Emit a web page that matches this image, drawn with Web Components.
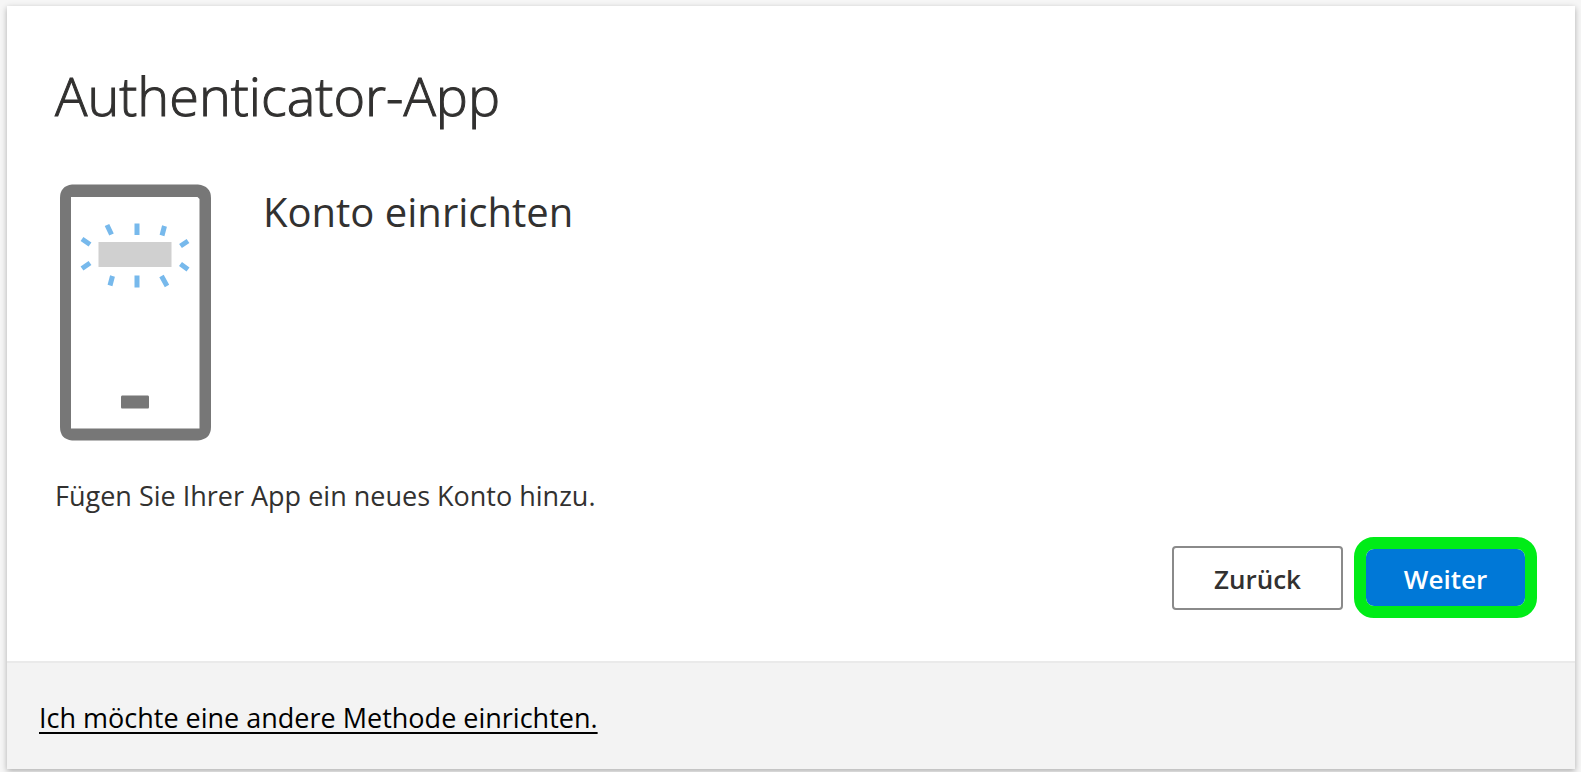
<!DOCTYPE html>
<html lang="de">
<head>
<meta charset="utf-8">
<meta name="viewport" content="width=device-width, initial-scale=1">
<title>Authenticator-App</title>
<style>
  html { background: #f6f6f6; }
  body { margin: 0; padding: 6px 6px 3px 7px; font: 27px/36px "Segoe UI", "Open Sans", "Noto Sans", sans-serif; color: #323130; }
</style>
</head>
<body>
<setup-card>
  <span slot="title">Authenticator-App</span>
  <phone-illustration slot="picture"></phone-illustration>
  <span slot="heading">Konto einrichten</span>
  <span slot="text">Fügen Sie Ihrer App ein neues Konto hinzu.</span>
  <action-button slot="actions">Zurück</action-button>
  <action-button slot="actions" primary>Weiter</action-button>
  <method-link slot="footer" href="#methode">Ich möchte eine andere Methode einrichten.</method-link>
</setup-card>

<template id="setup-card">
  <style>
    :host { display: block; background: #fff; box-shadow: 0 2px 6px rgba(0,0,0,.3); }
    main { padding: 57px 38px 43px 48px; }
    h1, h2, p { margin: 0; }
    h1 { font-size: 54px; line-height: 64px; font-weight: 300; -webkit-text-stroke: 1px currentColor; }
    .intro { display: flex; align-items: flex-start; gap: 52px; margin-top: 55px; }
    h2 { font-size: 40px; line-height: 60px; font-weight: 400; }
    p { margin-top: 37px; }
    .actions { display: flex; justify-content: flex-end; align-items: center; gap: 11px; margin-top: 23px; }
    footer { background: #f3f3f3; border-top: 2px solid #eaeaea; padding: 37px 32px 33px; }
  </style>
  <main>
    <h1><slot name="title"></slot></h1>
    <div class="intro">
      <slot name="picture"></slot>
      <h2><slot name="heading"></slot></h2>
    </div>
    <p><slot name="text"></slot></p>
    <div class="actions"><slot name="actions"></slot></div>
  </main>
  <footer><slot name="footer"></slot></footer>
</template>

<template id="phone-illustration">
  <style>
    :host { display: block; flex: none; padding: 2px 0 0 4px; }
    svg { display: block; width: 152px; height: 257px; }
  </style>
  <svg viewBox="0 0 152 257" aria-hidden="true">
    <path fill="#777" fill-rule="evenodd" d="M13 .5H139Q152 2 152 14V243Q152 255 139 256.500H13Q1 255 1 243V14Q1 2 13 .5ZM12 13V244.500H140.500V15L138.500 13Z"/>
    <path fill="#d0d0d0" d="M39.500 58H112.500V83H39.500Z"/>
    <path fill="#777" d="M63 211.500H89Q90 211.500 90 213V223Q90 224.500 89 224.500H63Q62 224.500 62 223V213Q62 211.500 63 211.500Z"/>
    <path fill="none" stroke="#77b9ec" stroke-width="5" d="M48 41L52.500 50.500M78 39.500V51M105.500 42L103 51.500M23 55L31 60.500M129 57L121.500 62M23 84.500L31 79M121.500 80L129 85.500M51 101.500L53.500 92M78 91.500V103.500M102.500 92L108 102"/>
  </svg>
</template>

<template id="action-button">
  <style>
    :host { display: block; }
    button { display: block; box-sizing: border-box; min-width: 171px; height: 64px; margin: 0; padding: 2px 24px 0; font: inherit; font-weight: 600; font-size: 26px; color: inherit; background: #fff; border: 2px solid #8a8a8a; border-radius: 4px; cursor: pointer; }
    :host([primary]) button { min-width: 183px; height: 81px; color: #fff; background: #0078d7; background-clip: padding-box; border: 12px solid #00ec17; border-radius: 20px; }
  </style>
  <button type="button"><slot></slot></button>
</template>

<template id="method-link">
  <style>
    :host { display: block; }
    a { color: #000; text-decoration: underline; text-decoration-thickness: 2px; text-underline-offset: 4px; text-decoration-skip-ink: none; }
  </style>
  <a><slot></slot></a>
</template>

<script>
  class TemplateElement extends HTMLElement {
    constructor() {
      super();
      const template = document.getElementById(this.localName);
      this.attachShadow({ mode: "open" }).append(template.content.cloneNode(true));
    }
  }
  customElements.define("setup-card", class extends TemplateElement {});
  customElements.define("phone-illustration", class extends TemplateElement {});
  customElements.define("action-button", class extends TemplateElement {});
  customElements.define("method-link", class extends TemplateElement {
    connectedCallback() {
      this.shadowRoot.querySelector("a").href = this.getAttribute("href");
    }
  });
</script>
</body>
</html>
